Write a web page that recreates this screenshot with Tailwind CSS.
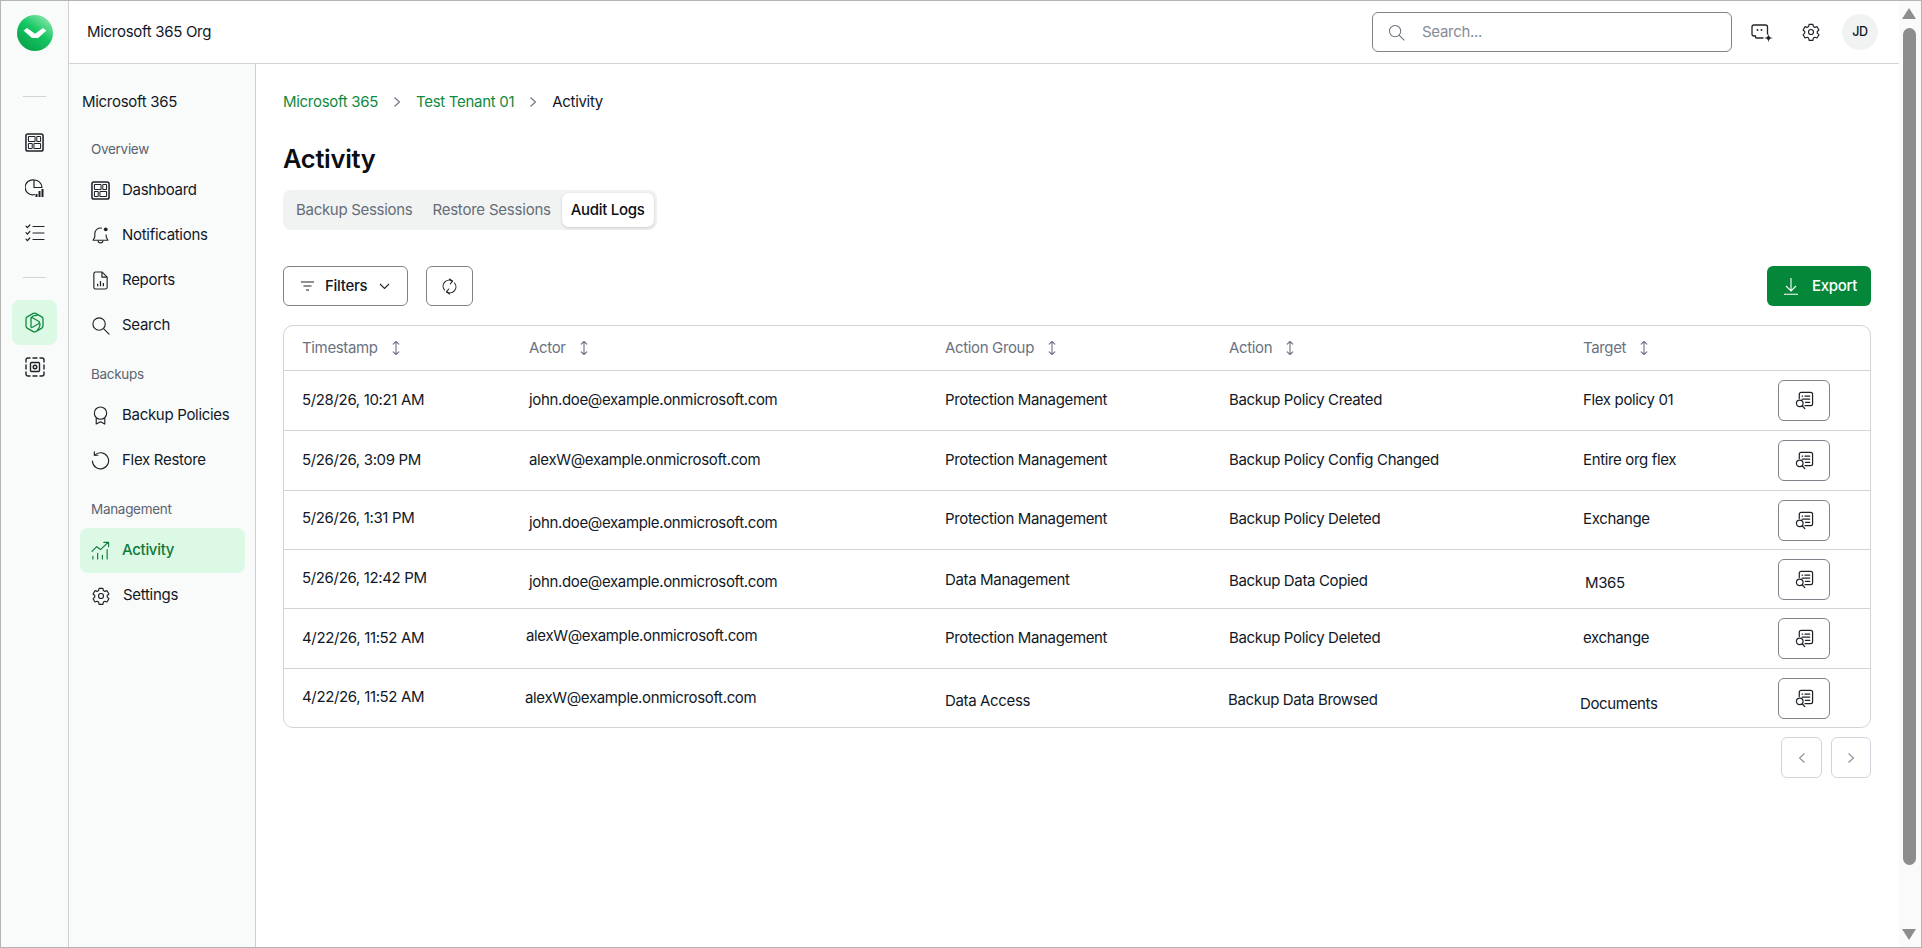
<!DOCTYPE html>
<html lang="en">
<head>
  <meta charset="UTF-8">
  <meta name="viewport" content="width=device-width, initial-scale=1.0">
  <title>Activity</title>
  <script src="https://cdn.jsdelivr.net/npm/@tailwindcss/browser@4"></script>
</head>
<body class="bg-white font-['Inter',sans-serif] text-[15px] tracking-[-0.3px] text-[#111827] overflow-hidden">
  <svg class="hidden">
    <symbol id="i-dash" viewBox="0 0 20 20" fill="none" stroke="currentColor" stroke-width="1.1"><rect x="1" y="1" width="18" height="18" rx="2" stroke-width="1.6"/><rect x="3.6" y="3.6" width="7" height="5.4" rx=".6"/><rect x="12.4" y="3.6" width="4" height="5.4" rx=".6"/><rect x="3.6" y="11" width="4" height="5.4" rx=".6"/><rect x="9.4" y="11" width="7" height="5.4" rx=".6"/></symbol>
    <symbol id="i-gear" viewBox="0 0 24 24" fill="none" stroke="currentColor" stroke-width="1.4" stroke-linejoin="round"><path d="M9.7 2.8h4.6l.6 2.7 1.7 1 2.6-.9 2.3 4-2 1.800v2l2 1.800-2.300 4-2.600-.9-1.700 1-.6 2.700H9.700l-.6-2.700-1.700-1-2.600.9-2.300-4 2-1.800v-2l-2-1.800 2.300-4 2.600.9 1.700-1z"/><circle cx="12" cy="12" r="3"/></symbol>
    <symbol id="i-log" viewBox="0 0 20 20" fill="none" stroke="currentColor" stroke-width="1.300" stroke-linecap="round"><path d="M4.500 8V3.500a2 2 0 0 1 2-2h10a2 2 0 0 1 2 2v10a2 2 0 0 1-2 2h-6"/><path d="M7.500 5.500h.5M10.500 5.500h5M7.500 8.500h8M11 12h4.500"/><circle cx="5" cy="13" r="3.500"/><path d="M7.800 15.800l2.500 2.700"/></symbol>
    <symbol id="i-sort" viewBox="0 0 10 16" fill="none" stroke="currentColor" stroke-width="1.100" stroke-linecap="round" stroke-linejoin="round"><path d="M5 1.500v13M2.200 4.200L5 1.500l2.800 2.700M2.200 11.800L5 14.500l2.800-2.700"/></symbol>
  </svg>

  <div class="flex h-[948px] w-[1922px] border border-[#b4b4b4]">
    <!-- icon rail -->
    <aside class="w-[68px] shrink-0 bg-[#f9fbfa] border-r border-[#cfcfcf] flex flex-col items-center">
      <svg class="mt-[14px] w-9 h-9 shrink-0" viewBox="0 0 36 36">
        <defs><linearGradient id="logo" x1="0.85" y1="0.05" x2="0.2" y2="0.95"><stop offset="0" stop-color="#8ce8ac"/><stop offset="0.45" stop-color="#16c763"/><stop offset="1" stop-color="#07a24a"/></linearGradient></defs>
        <circle cx="18" cy="18" r="18" fill="url(#logo)"/>
        <path d="M6.500 15.500L10 13l8 5.800L26 13l3.500 2.500L21 23h-6z" fill="#fff"/>
      </svg>
      <div class="mt-[45px] w-[23px] h-px bg-[#d4d4d4]"></div>
      <svg class="mt-[36px] w-[19px] h-[19px] text-[#1f2328]"><use href="#i-dash"/></svg>
      <svg class="mt-[26px] w-5 h-5 text-[#1f2328]" viewBox="0 0 20 20" fill="none" stroke="currentColor" stroke-width="1.200"><path d="M9 2a7.500 7.500 0 1 0 1 14.500"/><path d="M9 2v7.500h8A7.700 7.700 0 0 0 9 2z"/><path d="M11.500 19v-3M14.500 19v-6M17.500 19v-8" stroke-width="2"/></svg>
      <svg class="mt-[25px] w-5 h-5 text-[#1f2328]" viewBox="0 0 20 20" fill="none" stroke="currentColor" stroke-width="1.200" stroke-linecap="round"><path d="M8 3.500h11M8 10h11M8 16.500h11"/><path d="M1 3.200l1.400 1.400L4.800 2M1 9.700l1.400 1.400 2.400-2.600M1 16.200l1.400 1.400 2.400-2.600"/></svg>
      <div class="mt-[34px] w-[23px] h-px bg-[#d4d4d4]"></div>
      <div class="mt-[22px] w-[45px] h-[45px] rounded-[8px] bg-[#dcf9e6] flex items-center justify-center">
        <svg class="w-[19px] h-[21px] text-[#0f8a3f]" viewBox="0 0 19 21" fill="none" stroke="currentColor" stroke-width="1.300" stroke-linejoin="round" stroke-linecap="round"><path d="M8.300 1.400a2.400 2.400 0 0 1 2.400 0l6.100 3.500a2.400 2.400 0 0 1 1.200 2v7.200a2.400 2.400 0 0 1-1.200 2l-6.100 3.500a2.400 2.400 0 0 1-2.400 0l-6.100-3.500a2.400 2.400 0 0 1-1.200-2V6.900a2.400 2.400 0 0 1 1.200-2z"/><path d="M6 6.500Q6 5 7.500 5.800L14 9.500Q15 10.500 14 11.500L7.500 15.200Q6 16 6 14.500Z"/><path d="M6.200 6Q8 3 12 3.500M14.500 10.500Q16 14 12.500 18"/></svg>
      </div>
      <svg class="mt-[12px] w-5 h-5 text-[#1f2328]" viewBox="0 0 20 20" fill="none" stroke="currentColor" stroke-width="1.400" stroke-linecap="round"><path d="M1 5V3a2 2 0 0 1 2-2h2M8 1h4M15 1h2a2 2 0 0 1 2 2v2M19 8v4M19 15v2a2 2 0 0 1-2 2h-2M12 19H8M5 19H3a2 2 0 0 1-2-2v-2M1 12V8"/><rect x="5.500" y="5.500" width="9" height="9" rx="1"/><circle cx="10" cy="10" r="1.800"/></svg>
    </aside>

    <div class="flex-1 flex flex-col min-w-0">
      <!-- top bar -->
      <header class="h-[63px] shrink-0 border-b border-[#d4d4d4] flex items-center pl-[18px] pr-[21px]">
        <span>Microsoft 365 Org</span>
        <div class="ml-auto flex items-center">
          <div class="w-[360px] h-[40px] border border-[#7d8389] rounded-[6px] flex items-center pl-[15px] gap-[17px] text-[#6b7280]">
            <svg class="w-[17px] h-[17px]" viewBox="0 0 18 18" fill="none" stroke="currentColor" stroke-width="1.100" stroke-linecap="round"><circle cx="7.500" cy="7.500" r="6"/><path d="M12 12l5 5"/></svg>
            <span class="text-[#868c94]">Search...</span>
          </div>
          <svg class="ml-[19px] w-[22px] h-[22px] text-[#1f2328]" viewBox="0 0 22 22" fill="none" stroke="currentColor" stroke-width="1.300" stroke-linecap="round"><path d="M16.500 13V6a2 2 0 0 0-2-2H3a2 2 0 0 0-2 2v7a2 2 0 0 0 2 2h1.500v1a1 1 0 0 0 1 1H12"/><path d="M6.500 9v.1M10.500 9v.1" stroke-width="1.900"/><path d="M17.500 12.500c.3 3 1.200 4 4.300 4.500-3.100.5-4 1.500-4.300 4.500-.3-3-1.200-4-4.300-4.500 3.100-.5 4-1.500 4.300-4.500z" fill="currentColor" stroke="none"/></svg>
          <svg class="ml-[28px] w-[20px] h-[20px] text-[#1f2328]"><use href="#i-gear"/></svg>
          <div class="ml-[21px] w-9 h-9 rounded-full bg-[#f1f3f3] flex items-center justify-center text-[12.500px] font-medium">JD</div>
        </div>
      </header>

      <div class="flex-1 flex min-h-0">
        <!-- sidebar -->
        <nav class="w-[187px] shrink-0 bg-[#f9fbfa] border-r border-[#cfcfcf] pl-[11px] pr-[10px] pt-[26px]">
          <div class="h-[24px] pl-[2px] flex items-center">Microsoft 365</div>
          <div class="mt-[23px] h-[24px] pl-[11px] flex items-center text-[13.500px] text-[#5b6370]">Overview</div>
          <a class="mt-[7px] h-[45px] pl-[11px] flex items-center gap-[12px]"><svg class="w-[19px] h-[19px] text-[#1f2328]"><use href="#i-dash"/></svg>Dashboard</a>
          <a class="h-[45px] pl-[11px] flex items-center gap-[12px]"><svg class="w-[19px] h-[19px] text-[#1f2328]" viewBox="0 0 20 20" fill="none" stroke="currentColor" stroke-width="1.200" stroke-linejoin="round"><path d="M11.500 2.300A6 6 0 0 0 4 8v3.500L2.200 15h15.600L16 11.500V9"/><path d="M7.500 15.500c0 3 5 3 5 0"/><circle cx="15.500" cy="3.500" r="2" fill="currentColor" stroke="none"/></svg>Notifications</a>
          <a class="h-[45px] pl-[11px] flex items-center gap-[12px]"><svg class="w-[19px] h-[19px] text-[#1f2328]" viewBox="0 0 20 20" fill="none" stroke="currentColor" stroke-width="1.200" stroke-linejoin="round"><path d="M4.500 1h7L17 6.500V17a2 2 0 0 1-2 2H5a2 2 0 0 1-2-2V3a2 2 0 0 1 1.500-2z"/><path d="M11.500 1v5.500H17"/><path d="M7 16v-2.500M10 16v-5.500M13 16v-3.500" stroke-width="1.300"/></svg>Reports</a>
          <a class="h-[45px] pl-[11px] flex items-center gap-[12px]"><svg class="w-[19px] h-[19px] text-[#1f2328]" viewBox="0 0 20 20" fill="none" stroke="currentColor" stroke-width="1.200" stroke-linecap="round"><circle cx="8.500" cy="8.500" r="6.500"/><path d="M13.500 13.500l5.500 5.500"/></svg>Search</a>
          <div class="mt-[14px] h-[24px] pl-[11px] flex items-center text-[13.500px] text-[#5b6370]">Backups</div>
          <a class="mt-[7px] h-[45px] pl-[11px] flex items-center gap-[12px]"><svg class="w-[19px] h-[19px] text-[#1f2328]" viewBox="0 0 20 20" fill="none" stroke="currentColor" stroke-width="1.200" stroke-linejoin="round"><circle cx="10" cy="7.500" r="6.500"/><path d="M5.500 12.500V19l4.500-2.500 4.500 2.500v-6.500"/></svg>Backup Policies</a>
          <a class="h-[45px] pl-[11px] flex items-center gap-[12px]"><svg class="w-[19px] h-[19px] text-[#1f2328]" viewBox="0 0 20 20" fill="none" stroke="currentColor" stroke-width="1.200" stroke-linecap="round" stroke-linejoin="round"><path d="M4 4.300A8.500 8.500 0 1 1 1.500 10.500"/><path d="M3.500 .8V4.500h3.700"/></svg>Flex Restore</a>
          <div class="mt-[14px] h-[24px] pl-[11px] flex items-center text-[13.500px] text-[#5b6370]">Management</div>
          <a class="mt-[7px] h-[45px] pl-[11px] flex items-center gap-[12px] rounded-[8px] bg-[#dcf9e6] text-[#0f7a39] font-medium"><svg class="w-[19px] h-[19px]" viewBox="0 0 20 20" fill="none" stroke="currentColor" stroke-width="1.200" stroke-linecap="round" stroke-linejoin="round"><path d="M1 11l5-5 4 3 8-7.500M13.500 1.500H18.500V6"/><path d="M2 19v-3M7 19v-6M12 19v-4M17 19V9"/></svg>Activity</a>
          <a class="h-[45px] pl-[11px] flex items-center gap-[12px]"><svg class="w-[20px] h-[20px] text-[#1f2328]"><use href="#i-gear"/></svg>Settings</a>
        </nav>

        <!-- content -->
        <main class="flex-1 min-w-0 pl-[27px] pr-[28px] pt-[26px]">
          <div class="flex items-center h-[24px]">
            <span class="text-[#0f8a3f]">Microsoft 365</span>
            <svg class="mx-[15px] w-[8px] h-[12px] text-[#6b7280]" viewBox="0 0 8 12" fill="none" stroke="currentColor" stroke-width="1.100"><path d="M1.500 1.500L6.500 6l-5 4.500"/></svg>
            <span class="text-[#0f8a3f]">Test Tenant 01</span>
            <svg class="mx-[15px] w-[8px] h-[12px] text-[#6b7280]" viewBox="0 0 8 12" fill="none" stroke="currentColor" stroke-width="1.100"><path d="M1.500 1.500L6.500 6l-5 4.500"/></svg>
            <span>Activity</span>
          </div>
          <h1 class="mt-[27px] h-[36px] flex items-center text-[25.500px] font-semibold text-[#0b0f14]">Activity</h1>
          <div class="mt-[13px] inline-flex items-center h-[40px] rounded-[8px] bg-[#f1f3f3] pl-[3px] pr-[3px]">
            <span class="pl-[10px] pr-[10px] h-[34px] flex items-center text-[#656c76]">Backup Sessions</span>
            <span class="pl-[10px] pr-[11px] h-[34px] flex items-center text-[#656c76] tracking-[-0.22px]">Restore Sessions</span>
            <span class="pl-[9px] pr-[10px] h-[34px] flex items-center rounded-[7px] bg-white shadow-[0_1px_3px_rgba(0,0,0,0.16)] font-medium text-[#0b0f14]">Audit Logs</span>
          </div>
          <div class="mt-[36px] flex items-center h-[40px]">
            <button class="w-[125px] h-[40px] border border-[#7d8389] rounded-[6px] flex items-center pl-[17px]">
              <svg class="w-[13px] h-[10px] text-[#1f2328]" viewBox="0 0 13 10" fill="none" stroke="currentColor" stroke-width="1.100"><path d="M0 1h13M2.500 5h8M5 9h3"/></svg>
              <span class="ml-[11px] font-medium">Filters</span>
              <svg class="ml-[12px] w-[11px] h-[7px] text-[#1f2328]" viewBox="0 0 11 7" fill="none" stroke="currentColor" stroke-width="1.100"><path d="M1 1l4.500 4.500L10 1"/></svg>
            </button>
            <button class="ml-[18px] w-[47px] h-[40px] border border-[#7d8389] rounded-[6px] flex items-center justify-center">
              <svg class="w-[15px] h-[17px] text-[#1f2328]" viewBox="0 0 15 17" fill="none" stroke="currentColor" stroke-width="1.100" stroke-linecap="round" stroke-linejoin="round"><path d="M10.500 3.200A6 6 0 0 0 2.500 12M4.500 13.800a6 6 0 0 0 8-8.800"/><path d="M7.500 1l3 2.200-2.300 2.800M7.500 16l-3-2.200 2.300-2.800"/></svg>
            </button>
            <button class="ml-auto w-[104px] h-[40px] rounded-[6px] bg-[#05873a] text-white flex items-center pl-[17px] gap-[14px] font-medium">
              <svg class="w-[14px] h-[17px]" viewBox="0 0 14 17" fill="none" stroke="currentColor" stroke-width="1.100"><path d="M7 0v12.500M2 8l5 5 5-5M0 16.200h14"/></svg>
              Export
            </button>
          </div>

          <div class="mt-[19px] border border-[#d4d4d4] rounded-[10px] tracking-[-0.35px]">
            <div class="grid grid-cols-[227px_416px_284px_354px_195px_1fr] pl-[18px] h-[45px] items-center border-b border-[#d4d4d4] text-[#6b7280]">
              <div class="flex items-center gap-[13px]">Timestamp<svg class="w-[10px] h-[16px]"><use href="#i-sort"/></svg></div>
              <div class="flex items-center gap-[13px]">Actor<svg class="w-[10px] h-[16px]"><use href="#i-sort"/></svg></div>
              <div class="flex items-center gap-[13px]">Action Group<svg class="w-[10px] h-[16px]"><use href="#i-sort"/></svg></div>
              <div class="flex items-center gap-[13px]">Action<svg class="w-[10px] h-[16px]"><use href="#i-sort"/></svg></div>
              <div class="flex items-center gap-[13px]">Target<svg class="w-[10px] h-[16px]"><use href="#i-sort"/></svg></div>
              <div></div>
            </div>
            <div class="grid grid-cols-[227px_416px_284px_354px_195px_1fr] pl-[18px] h-[60px] items-center border-b border-[#d4d4d4]">
              <span>5/28/26, 10:21 AM</span><span>john.doe@example.onmicrosoft.com</span><span>Protection Management</span><span>Backup Policy Created</span><span>Flex policy 01</span>
              <button class="w-[52px] h-[41px] border border-[#7d8389] rounded-[6px] flex items-center justify-center"><svg class="w-[19px] h-[19px] text-[#1f2328]"><use href="#i-log"/></svg></button>
            </div>
            <div class="grid grid-cols-[227px_416px_284px_354px_195px_1fr] pl-[18px] h-[60px] items-center border-b border-[#d4d4d4]">
              <span>5/26/26, 3:09 PM</span><span>alexW@example.onmicrosoft.com</span><span>Protection Management</span><span>Backup Policy Config Changed</span><span>Entire org flex</span>
              <button class="w-[52px] h-[41px] border border-[#7d8389] rounded-[6px] flex items-center justify-center"><svg class="w-[19px] h-[19px] text-[#1f2328]"><use href="#i-log"/></svg></button>
            </div>
            <div class="grid grid-cols-[227px_416px_284px_354px_195px_1fr] pl-[18px] h-[59px] items-center border-b border-[#d4d4d4]">
              <span class="-translate-y-[2px]">5/26/26, 1:31 PM</span><span class="translate-y-[3px]">john.doe@example.onmicrosoft.com</span><span class="-translate-y-[1px]">Protection Management</span><span class="-translate-y-[1px]">Backup Policy Deleted</span><span class="-translate-y-[1px]">Exchange</span>
              <button class="w-[52px] h-[41px] border border-[#7d8389] rounded-[6px] flex items-center justify-center"><svg class="w-[19px] h-[19px] text-[#1f2328]"><use href="#i-log"/></svg></button>
            </div>
            <div class="grid grid-cols-[227px_416px_284px_354px_195px_1fr] pl-[18px] h-[59px] items-center border-b border-[#d4d4d4]">
              <span class="-translate-y-[1px]">5/26/26, 12:42 PM</span><span class="translate-y-[3px]">john.doe@example.onmicrosoft.com</span><span class="translate-y-[1px]">Data Management</span><span class="translate-y-[2px]">Backup Data Copied</span><span class="translate-x-[2px] translate-y-[4px]">M365</span>
              <button class="w-[52px] h-[41px] border border-[#7d8389] rounded-[6px] flex items-center justify-center"><svg class="w-[19px] h-[19px] text-[#1f2328]"><use href="#i-log"/></svg></button>
            </div>
            <div class="grid grid-cols-[227px_416px_284px_354px_195px_1fr] pl-[18px] h-[60px] items-center border-b border-[#d4d4d4]">
              <span>4/22/26, 11:52 AM</span><span class="-translate-x-[3px] -translate-y-[2px]">alexW@example.onmicrosoft.com</span><span>Protection Management</span><span>Backup Policy Deleted</span><span>exchange</span>
              <button class="w-[52px] h-[41px] border border-[#7d8389] rounded-[6px] flex items-center justify-center"><svg class="w-[19px] h-[19px] text-[#1f2328]"><use href="#i-log"/></svg></button>
            </div>
            <div class="grid grid-cols-[227px_416px_284px_354px_195px_1fr] pl-[18px] h-[58px] items-center">
              <span class="-translate-y-[1px]">4/22/26, 11:52 AM</span><span class="-translate-x-[4px]">alexW@example.onmicrosoft.com</span><span class="translate-y-[3px]">Data Access</span><span class="-translate-x-[1px] translate-y-[2px]">Backup Data Browsed</span><span class="-translate-x-[3px] translate-y-[6px]">Documents</span>
              <button class="w-[52px] h-[41px] border border-[#7d8389] rounded-[6px] flex items-center justify-center"><svg class="w-[19px] h-[19px] text-[#1f2328]"><use href="#i-log"/></svg></button>
            </div>
          </div>

          <div class="mt-[9px] flex justify-end gap-[9px]">
            <button class="w-[41px] h-[41px] border border-[#d1d5db] rounded-[6px] flex items-center justify-center"><svg class="w-[8px] h-[12px] text-[#8b9199]" viewBox="0 0 8 12" fill="none" stroke="currentColor" stroke-width="1.100"><path d="M6.500 1.500L1.500 6l5 4.500"/></svg></button>
            <button class="w-[40px] h-[41px] border border-[#d1d5db] rounded-[6px] flex items-center justify-center"><svg class="w-[8px] h-[12px] text-[#8b9199]" viewBox="0 0 8 12" fill="none" stroke="currentColor" stroke-width="1.100"><path d="M1.500 1.500L6.500 6l-5 4.500"/></svg></button>
          </div>
        </main>
      </div>
    </div>

    <!-- scrollbar -->
    <div class="w-[22px] shrink-0 bg-[#fafafa] flex flex-col items-center pr-[2px] pt-[7px] pb-[7px]">
      <svg class="w-[14px] h-[11px] shrink-0" viewBox="0 0 14 11"><path d="M7 0l7 11H0z" fill="#8d8d8d"/></svg>
      <div class="mt-[9px] w-[13px] h-[837px] rounded-[7px] bg-[#8d8d8d]"></div>
      <svg class="mt-auto w-[14px] h-[11px] shrink-0" viewBox="0 0 14 11"><path d="M7 11L14 0H0z" fill="#8d8d8d"/></svg>
    </div>
  </div>
</body>
</html>
